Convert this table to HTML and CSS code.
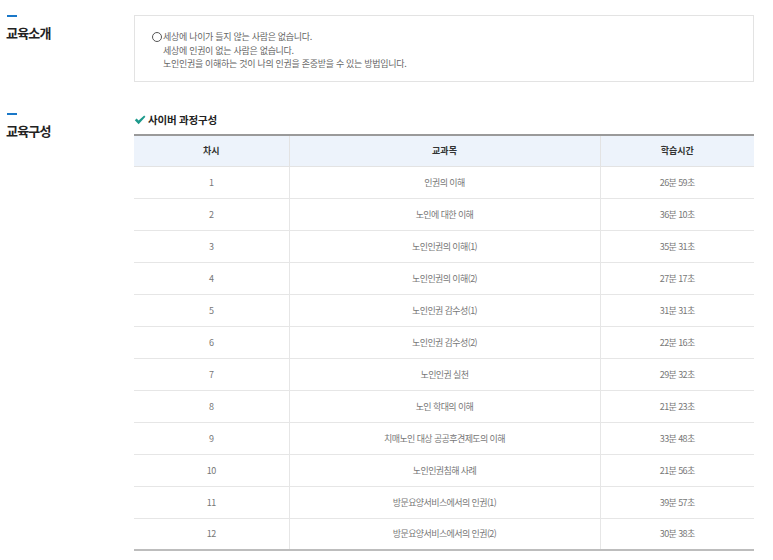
FILE: index.html
```html
<!DOCTYPE html>
<html lang="ko">
<head>
<meta charset="utf-8">
<link rel="stylesheet" href="styles.css">
</head>
<body>
<div class="page">
  <section class="section intro">
    <div class="side">
      <span class="bar"></span>
      <h2 class="title">교육소개</h2>
    </div>
    <div class="box">
      <p class="line"><span class="circle"></span>세상에 나이가 들지 않는 사람은 없습니다.</p>
      <p class="line">세상에 인권이 없는 사람은 없습니다.</p>
      <p class="line">노인인권을 이해하는 것이 나의 인권을 존중받을 수 있는 방법입니다.</p>
    </div>
  </section>
  <section class="section course">
    <div class="side">
      <span class="bar"></span>
      <h2 class="title">교육구성</h2>
    </div>
    <div class="content">
      <h3 class="subtitle"><svg class="check" width="12" height="10" viewBox="0 0 12 10"><path d="M0.8 5.2 L2.6 3.6 L4.6 5.6 L10.2 0.4 L11.4 1.8 L4.6 9.2 Z" fill="#1d9a8c"/></svg>사이버 과정구성</h3>
      <table class="tbl">
        <thead>
          <tr><th class="c1">차시</th><th class="c2">교과목</th><th class="c3">학습시간</th></tr>
        </thead>
        <tbody>
          <tr><td>1</td><td>인권의 이해</td><td>26분 59초</td></tr>
          <tr><td>2</td><td>노인에 대한 이해</td><td>36분 10초</td></tr>
          <tr><td>3</td><td>노인인권의 이해(1)</td><td>35분 31초</td></tr>
          <tr><td>4</td><td>노인인권의 이해(2)</td><td>27분 17초</td></tr>
          <tr><td>5</td><td>노인인권 감수성(1)</td><td>31분 31초</td></tr>
          <tr><td>6</td><td>노인인권 감수성(2)</td><td>22분 16초</td></tr>
          <tr><td>7</td><td>노인인권 실천</td><td>29분 32초</td></tr>
          <tr><td>8</td><td>노인 학대의 이해</td><td>21분 23초</td></tr>
          <tr><td>9</td><td>치매노인 대상 공공후견제도의 이해</td><td>33분 48초</td></tr>
          <tr><td>10</td><td>노인인권침해 사례</td><td>21분 56초</td></tr>
          <tr><td>11</td><td>방문요양서비스에서의 인권(1)</td><td>39분 57초</td></tr>
          <tr><td>12</td><td>방문요양서비스에서의 인권(2)</td><td>30분 38초</td></tr>
        </tbody>
      </table>
    </div>
  </section>
</div>
</body>
</html>
```

FILE: styles.css
```css
* { box-sizing: border-box; }
html, body { margin: 0; padding: 0; background: #fff; }
body {
  font-family: "Noto Sans CJK KR", "Noto Sans", sans-serif;
  color: #333;
}
.page { width: 773px; padding-left: 6px; }
.section {
  display: grid;
  grid-template-columns: 128px 620px;
}
.intro { padding-top: 14px; }
.course { margin-top: 31px; }
.side { display: flex; flex-direction: column; align-items: flex-start; padding-top: 1px; }
.course .side { padding-top: 0; }
.bar { display: block; width: 10px; height: 2px; background: #1a78c8; margin-left: 1px; }
.title {
  margin: 7px 0 0;
  font-size: 13px;
  line-height: 17px;
  font-weight: 700;
  color: #222;
  letter-spacing: -0.8px;
}
.box {
  margin-top: 1px;
  height: 67px;
  border: 1px solid #e3e3e3;
  padding: 14px 0 0 28px;
}
.line {
  margin: 0;
  font-size: 9px;
  line-height: 13.5px;
  color: #666;
  letter-spacing: -0.3px;
}
.line:first-child { margin-left: -11px; display: flex; align-items: center; }
.circle {
  display: inline-block;
  width: 10px;
  height: 10px;
  border: 1px solid #555;
  border-radius: 50%;
  margin-right: 1px;
}
.subtitle {
  margin: 0 0 7px;
  display: flex;
  align-items: center;
  gap: 2px;
  font-size: 10.5px;
  line-height: 14px;
  font-weight: 700;
  color: #222;
  letter-spacing: -0.2px;
}
.check { display: block; }
.tbl {
  width: 620px;
  border-collapse: collapse;
  table-layout: fixed;
  border-top: 2px solid #9a9a9a;
  border-bottom: 2px solid #bdbdbd;
}
.c1 { width: 155px; }
.c2 { width: 311px; }
.c3 { width: 154px; }
.tbl th {
  height: 31px;
  background: #edf3fb;
  font-size: 9px;
  font-weight: 700;
  color: #333;
  border-bottom: 1px solid #e3e3e3;
  border-left: 1px solid #e3e3e3;
  padding: 0;
}
.tbl td {
  height: 32px;
  text-align: center;
  font-size: 9px;
  color: #777;
  letter-spacing: -0.6px;
  border-bottom: 1px solid #e6e6e6;
  border-left: 1px solid #e6e6e6;
  padding: 0;
}
.tbl th:first-child, .tbl td:first-child { border-left: none; }
.tbl tr:last-child td { border-bottom: none; }
```
